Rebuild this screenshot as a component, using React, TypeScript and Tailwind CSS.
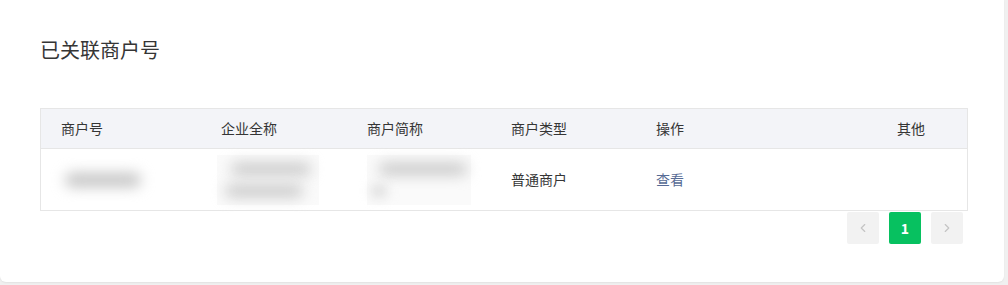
import { ChevronLeft, ChevronRight } from "lucide-react";

const cols = [
  { key: "id", title: "商户号", width: "w-[160px]" },
  { key: "full", title: "企业全称", width: "w-[146px]" },
  { key: "short", title: "商户简称", width: "w-[144px]" },
  { key: "type", title: "商户类型", width: "w-[145px]" },
  { key: "op", title: "操作", width: "flex-1" },
];

export default function App() {
  return (
    <div
      className="h-[285px] w-[1008px] bg-[#f0f0f0]"
      style={{ fontFamily: '"Noto Sans CJK SC", "Noto Sans", sans-serif' }}
    >
      <div className="h-[282px] w-[1004px] rounded-b-md bg-white px-10 pt-[36px] shadow-[0_1px_2px_rgba(0,0,0,0.06)]">
        <h2 className="text-[20px] leading-[28px] text-[#353535]">已关联商户号</h2>

        {/* 表格 */}
        <div className="mt-[44px] w-[928px] border border-[#e6e6e6] text-[14px] text-[#353535]">
          <div className="flex h-[40px] items-center border-b border-[#e6e6e6] bg-[#f3f4f8]">
            {cols.map((c) => (
              <div key={c.key} className={`${c.width} shrink-0 pl-5`}>
                {c.title}
              </div>
            ))}
            <div className="w-[100px] shrink-0 pr-[42px] text-right">其他</div>
          </div>

          <div className="flex h-[61px] items-center">
            {/* 模糊处理的敏感信息 */}
            <div className="w-[160px] shrink-0 pl-[24px]">
              <div className="h-[14px] w-[76px] rounded-full bg-[#c4c4c4] blur-[7px]" />
            </div>
            <div className="w-[146px] shrink-0 pl-4">
              <div className="flex h-[50px] w-[102px] flex-col justify-center gap-[10px] bg-[#fafafa] px-2">
                <div className="h-[12px] w-[80px] self-end rounded-full bg-[#c8c8c8] blur-[7px]" />
                <div className="h-[12px] w-[78px] rounded-full bg-[#c8c8c8] blur-[7px]" />
              </div>
            </div>
            <div className="w-[144px] shrink-0 pl-5">
              <div className="flex h-[50px] w-[104px] flex-col justify-center gap-[10px] bg-[#fafafa] px-1">
                <div className="h-[12px] w-[88px] self-end rounded-full bg-[#c8c8c8] blur-[7px]" />
                <div className="h-[12px] w-[16px] rounded-full bg-[#d8d8d8] blur-[6px]" />
              </div>
            </div>
            <div className="w-[145px] shrink-0 pl-5">普通商户</div>
            <div className="flex-1 pl-5 text-[#576b95]">查看</div>
          </div>
        </div>

        {/* 分页 */}
        <div className="flex w-[928px] justify-end gap-[10px] pr-[5px] pt-px">
          <button className="flex h-8 w-8 items-center justify-center rounded-[2px] bg-[#f2f2f2] text-[#c4c4c4]">
            <ChevronLeft size={14} strokeWidth={2} />
          </button>
          <button className="flex h-8 w-8 items-center justify-center rounded-[2px] bg-[#07c160] text-[14px] font-bold text-white">
            1
          </button>
          <button className="flex h-8 w-8 items-center justify-center rounded-[2px] bg-[#f2f2f2] text-[#c4c4c4]">
            <ChevronRight size={14} strokeWidth={2} />
          </button>
        </div>
      </div>
    </div>
  );
}
